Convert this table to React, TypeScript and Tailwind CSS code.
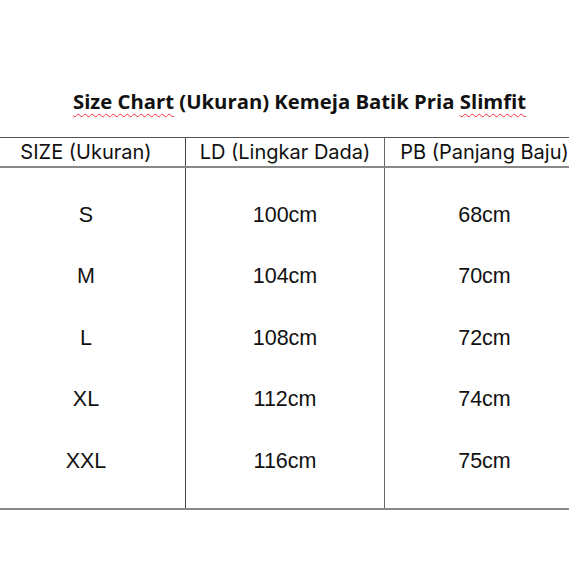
const rows = [
  { size: 'S', ld: '100cm', pb: '68cm' },
  { size: 'M', ld: '104cm', pb: '70cm' },
  { size: 'L', ld: '108cm', pb: '72cm' },
  { size: 'XL', ld: '112cm', pb: '74cm' },
  { size: 'XXL', ld: '116cm', pb: '75cm' },
]

export default function App() {
  return (
    <div className="w-[569px] h-[569px] overflow-hidden bg-white text-[#111]">
      {/* judul */}
      <div className="pt-[87px] pl-[73px] h-[137px]">
        <h1 className="text-[20.3px] font-bold leading-[28px] whitespace-nowrap font-['Open_Sans',sans-serif]">
          <span className="underline decoration-wavy decoration-red-500 decoration-1 underline-offset-4">Size Chart</span>{' '}
          (Ukuran) Kemeja Batik Pria{' '}
          <span className="underline decoration-wavy decoration-red-500 decoration-1 underline-offset-4">Slimfit</span>
        </h1>
      </div>

      {/* tabel */}
      <div className="ml-[-13px] w-[597px]">
        <div className="flex h-[31px] border-t border-[#555] border-b-2 border-b-[#888] font-['Inter',sans-serif] text-[20px] leading-[29px]">
          <div className="w-[199px] text-center border-r border-[#444]">SIZE (Ukuran)</div>
          <div className="w-[199px] text-center border-r border-[#666]">LD (Lingkar Dada)</div>
          <div className="w-[199px] text-center">PB (Panjang Baju)</div>
        </div>
        <div className="flex border-b-2 border-[#888] font-['Liberation_Sans',sans-serif] text-[21.5px]">
          <div className="w-[199px] border-r border-[#444] py-4">
            {rows.map((r) => (
              <div key={r.size} className="h-[61.5px] flex items-center justify-center">{r.size}</div>
            ))}
          </div>
          <div className="w-[199px] border-r border-[#666] py-4">
            {rows.map((r) => (
              <div key={r.ld} className="h-[61.5px] flex items-center justify-center">{r.ld}</div>
            ))}
          </div>
          <div className="w-[199px] py-4">
            {rows.map((r) => (
              <div key={r.pb} className="h-[61.5px] flex items-center justify-center">{r.pb}</div>
            ))}
          </div>
        </div>
      </div>
    </div>
  )
}
